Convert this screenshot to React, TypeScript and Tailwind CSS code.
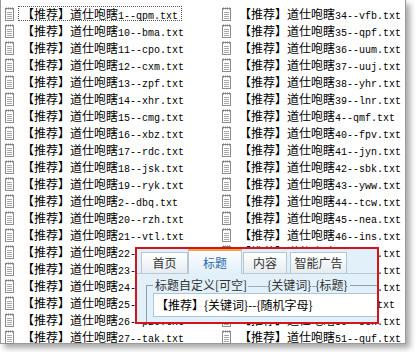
const leftRows: [string, string][] = [
  ['1', 'qpm'], ['10', 'bma'], ['11', 'cpo'], ['12', 'cxm'], ['13', 'zpf'], ['14', 'xhr'], ['15', 'cmg'],
  ['16', 'xbz'], ['17', 'rdc'], ['18', 'jsk'], ['19', 'ryk'], ['2', 'dbq'], ['20', 'rzh'], ['21', 'vtl'],
  ['22', 'mfe'], ['23', 'kqd'], ['24', 'hts'], ['25', 'wgn'], ['26', 'pzc'], ['27', 'tak'],
];
const rightRows: [string, string][] = [
  ['34', 'vfb'], ['35', 'qpf'], ['36', 'uum'], ['37', 'uuj'], ['38', 'yhr'], ['39', 'lnr'], ['4', 'qmf'],
  ['40', 'fpv'], ['41', 'jyn'], ['42', 'sbk'], ['43', 'yww'], ['44', 'tcw'], ['45', 'nea'], ['46', 'ins'],
  ['47', 'bjr'], ['48', 'fxo'], ['49', 'lga'], ['5', 'dtk'], ['50', 'seh'], ['51', 'quf'],
];

function DocIcon() {
  return (
    <svg width="10" height="14" viewBox="0 0 10 14" className="shrink-0">
      <rect x="0.5" y="1.5" width="8" height="12" fill="#fff" stroke="#8c8c8c" />
      <path d="M1.5 0.5v2M3.5 0.5v2M5.5 0.5v2M7.5 0.5v2" stroke="#7a7a7a" />
      <path d="M2 5.5h5M2 7.5h5M2 9.5h5M2 11.5h5" stroke="#a8a8a8" />
    </svg>
  );
}

function FileRow({ n, s, focus }: { n: string; s: string; focus?: boolean }) {
  return (
    <div className="flex h-[17px] items-center">
      <DocIcon />
      <span
        className={
          focus
            ? 'ml-[3px] block h-[15px] whitespace-nowrap border border-dotted border-[#555] px-[3px] leading-[13px] text-black'
            : 'ml-[3px] block h-[15px] whitespace-nowrap border border-transparent px-[3px] leading-[13px] text-black'
        }
      >
        <span className="font-['Noto_Sans_CJK_SC',sans-serif] text-[12px]">【推荐】道仕咆瞎</span>
        <span className="font-['Liberation_Mono',monospace] text-[10px]">{n}--{s}.txt</span>
      </span>
    </div>
  );
}

function TitleDialog() {
  return (
    <div className="absolute left-[134px] top-[247px] h-[77px] w-[244px] overflow-hidden border-2 border-[#d3141c] bg-[#e2f0f9] font-['Noto_Sans_CJK_SC',sans-serif] text-[12px]">
      <div className="flex h-[25px] items-end border-b border-[#b6cad8] pl-[4px]">
        <div className="flex h-[21px] w-[47px] items-center justify-center border border-b-0 border-[#b6c6d3] bg-gradient-to-b from-[#ffffff] to-[#e7ecf0] text-[#333]">首页</div>
        <div className="relative z-10 -mb-px flex h-[25px] w-[54px] items-start justify-center border border-b-0 border-t-2 border-[#b6c6d3] border-t-[#f3a33a] bg-gradient-to-b from-[#fbfdff] to-[#e2f0f9] pt-[3px] text-[#2a68b0]">标题</div>
        <div className="ml-[1px] flex h-[21px] w-[44px] items-center justify-center border border-b-0 border-[#b6c6d3] bg-gradient-to-b from-[#ffffff] to-[#e7ecf0] text-[#333]">内容</div>
        <div className="ml-[3px] flex h-[21px] w-[57px] items-center justify-center border border-b-0 border-[#b6c6d3] bg-gradient-to-b from-[#ffffff] to-[#e7ecf0] text-[#333]">智能广告</div>
      </div>
      <fieldset className="ml-[9px] mt-[4px] w-[300px] border border-[#8d9fae] pb-[6px] pl-[6px]">
        <legend className="px-[2px] leading-[14px] text-[#333]">
          标题自定义[可空]<span className="text-[#8d9fae]">——</span>{'{关键词}'}<span className="text-[#8d9fae]">-</span>{'{标题}'}
        </legend>
        <div className="mt-[1px] h-[24px] w-[260px] border border-[#a9c6da] bg-white pl-[2px] leading-[22px] text-black">
          【推荐】{'{关键词}--{随机字母}'}
        </div>
      </fieldset>
    </div>
  );
}

export default function App() {
  return (
    <div className="relative h-[352px] w-[416px] overflow-hidden bg-white">
      <div className="relative h-[344px] w-[406px] border-x border-b border-[#9b9b9b] bg-white shadow-[4px_4px_6px_rgba(0,0,0,0.35)]">
        <div className="flex pt-[5px]">
          <div className="w-[220px] pl-[4px]">
            {leftRows.map(([n, s], i) => (
              <FileRow key={n} n={n} s={s} focus={i === 0} />
            ))}
          </div>
          <div className="pl-[4px]">
            {rightRows.map(([n, s]) => (
              <FileRow key={n} n={n} s={s} />
            ))}
          </div>
        </div>
        <TitleDialog />
      </div>
    </div>
  );
}
